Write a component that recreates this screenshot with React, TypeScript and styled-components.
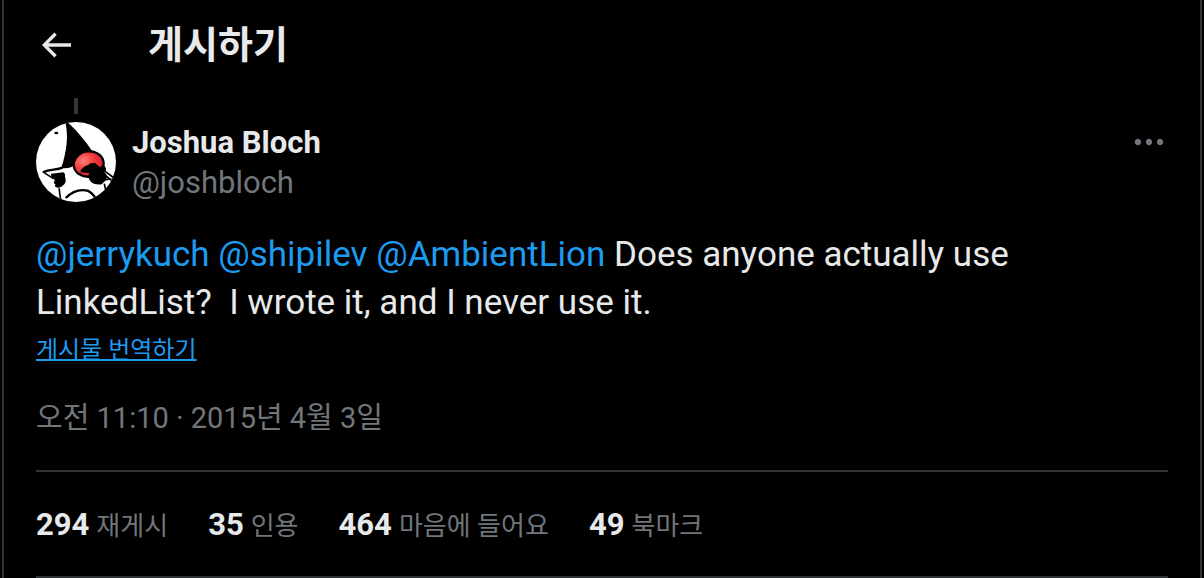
import React from "react";
import styled, { createGlobalStyle } from "styled-components";

const GlobalStyle = createGlobalStyle`
  *, *::before, *::after { box-sizing: border-box; }
  body {
    margin: 0;
    background: #000;
    color: #e7e9ea;
    font-family: Roboto, "Noto Sans CJK KR", sans-serif;
    font-size: 31px;
    line-height: 40px;
  }
`;

const Column = styled.main`
  margin: 0 2px;
  border: solid #2f3336;
  border-width: 0 2px;
  padding: 0 32px;
`;

const Header = styled.header`
  display: flex;
  align-items: center;
  gap: 72px;
  height: 90px;
`;

const IconButton = styled.button`
  display: flex;
  flex: none;
  padding: 0;
  border: 0;
  background: none;
  color: ${(p) => p.color};
  cursor: pointer;
`;

const Title = styled.h1`
  margin: 0;
  font-size: 38px;
  line-height: 48px;
  font-weight: 700;
`;

const ThreadLine = styled.div`
  width: 4px;
  height: 16px;
  margin: 8px 38px;
  background: #333639;
`;

const Author = styled.div`
  display: flex;
  align-items: flex-start;
  gap: 16px;
`;

const Avatar = styled.svg`
  flex: none;
  width: 80px;
  height: 80px;
`;

const Names = styled.div`
  display: flex;
  flex: 1;
  flex-direction: column;
  padding-top: 1px;
`;

const Name = styled.a`
  color: #e7e9ea;
  font-weight: 700;
  text-decoration: none;
`;

const Handle = styled.a`
  color: #71767b;
  text-decoration: none;
`;

const Body = styled.p`
  margin: 28px 0 0;
  font-size: 35px;
  line-height: 48px;
  white-space: pre-wrap;
`;

const Mention = styled.a`
  color: #1d9bf0;
  text-decoration: none;
`;

const Translate = styled.button`
  display: block;
  margin: 3px 0 0;
  padding: 0;
  border: 0;
  background: none;
  color: #1d9bf0;
  font: inherit;
  font-size: 24px;
  line-height: 40px;
  text-decoration: underline;
  text-decoration-thickness: 2px;
  cursor: pointer;
`;

const Posted = styled.time`
  display: block;
  margin: 28px 0 32px;
  color: #71767b;
  font-size: 29px;
`;

const Stats = styled.div`
  display: flex;
  flex-wrap: wrap;
  gap: 40px;
  padding: 33px 0 30px;
  border: solid #2f3336;
  border-width: 2px 0;
`;

const Stat = styled.a`
  display: flex;
  align-items: baseline;
  gap: 7px;
  color: #71767b;
  font-size: 26px;
  text-decoration: none;
`;

const Count = styled.strong`
  color: #e7e9ea;
  font-size: 31px;
`;

const stats = [
  { count: 294, label: "재게시" },
  { count: 35, label: "인용" },
  { count: 464, label: "마음에 들어요" },
  { count: 49, label: "북마크" },
];

const AvatarPicture = () => (
  <Avatar viewBox="0 0 240 240" role="img" aria-label="Joshua Bloch">
    <defs>
      <clipPath id="round">
        <circle cx="120" cy="120" r="120" />
      </clipPath>
      <radialGradient id="nose" cx="0.35" cy="0.35" r="0.7">
        <stop offset="0" stopColor="#ff8078" />
        <stop offset="0.5" stopColor="#f03a3c" />
        <stop offset="1" stopColor="#d81f28" />
      </radialGradient>
    </defs>
    <g clipPath="url(#round)">
      <rect width="240" height="240" fill="#fff" />
      <ellipse cx="61" cy="33" rx="6" ry="4" />
      <path d="M88 0C98 45 92 88 76 137C90 142 104 137 116 130C116 108 135 93 169 88C149 57 124 28 98 4Z" />
      <path d="M22 150C43 141 61 145 80 137" fill="none" stroke="#000" strokeWidth="7" />
      <path d="M20 149L52 170" stroke="#000" strokeWidth="5" />
      <path d="M45 155L82 151Q88 153 87 164Q92 178 85 187Q73 201 60 196Q54 191 59 187Q51 185 55 178Q61 175 46 166Z" />
      <path d="M69 199C72 210 70 220 75 234" fill="none" stroke="#000" strokeWidth="5" />
      <path d="M89 228C111 206 132 201 154 206C165 210 171 217 179 228" fill="none" stroke="#000" strokeWidth="7" />
      <ellipse cx="158" cy="126" rx="45" ry="38" fill="url(#nose)" stroke="#000" strokeWidth="7" transform="rotate(-8 158 126)" />
      <path d="M134 146Q142 132 157 129Q164 120 178 124Q185 130 191 135Q207 127 209 137Q213 143 205 151Q216 160 211 173L197 187Q174 190 162 176Q154 163 160 153Q147 153 134 151Z" />
      <path d="M203 145L240 172M209 161L234 182M200 174L227 171M205 185L209 205" stroke="#000" strokeWidth="5" />
    </g>
  </Avatar>
);

export default function App() {
  return (
    <>
      <GlobalStyle />
      <Column>
        <Header>
          <IconButton type="button" aria-label="뒤로" color="#e7e9ea">
            <svg width="40" height="40" viewBox="0 0 24 24" fill="currentColor">
              <path d="M7.414 13l5.043 5.04-1.414 1.42L3.586 12l7.457-7.46 1.414 1.42L7.414 11H21v2H7.414z" />
            </svg>
          </IconButton>
          <Title>게시하기</Title>
        </Header>
        <ThreadLine />
        <article>
          <Author>
            <AvatarPicture />
            <Names>
              <Name href="#joshbloch">Joshua Bloch</Name>
              <Handle href="#joshbloch">@joshbloch</Handle>
            </Names>
            <IconButton type="button" aria-label="더 보기" color="#71767b">
              <svg width="38" height="40" viewBox="0 0 24 24" fill="currentColor">
                <path d="M3 12c0-1.1.9-2 2-2s2 .9 2 2-.9 2-2 2-2-.9-2-2zm9 2c1.1 0 2-.9 2-2s-.9-2-2-2-2 .9-2 2 .9 2 2 2zm7 0c1.1 0 2-.9 2-2s-.9-2-2-2-2 .9-2 2 .9 2 2 2z" />
              </svg>
            </IconButton>
          </Author>
          <Body>
            <Mention href="#jerrykuch">@jerrykuch</Mention>{" "}
            <Mention href="#shipilev">@shipilev</Mention>{" "}
            <Mention href="#AmbientLion">@AmbientLion</Mention>
            {" Does anyone actually use LinkedList?  I wrote it, and I never use it."}
          </Body>
          <Translate type="button">게시물 번역하기</Translate>
          <Posted dateTime="2015-04-03T11:10">오전 11:10 · 2015년 4월 3일</Posted>
          <Stats>
            {stats.map((s) => (
              <Stat key={s.label} href="#stats">
                <Count>{s.count}</Count>
                {s.label}
              </Stat>
            ))}
          </Stats>
        </article>
      </Column>
    </>
  );
}
